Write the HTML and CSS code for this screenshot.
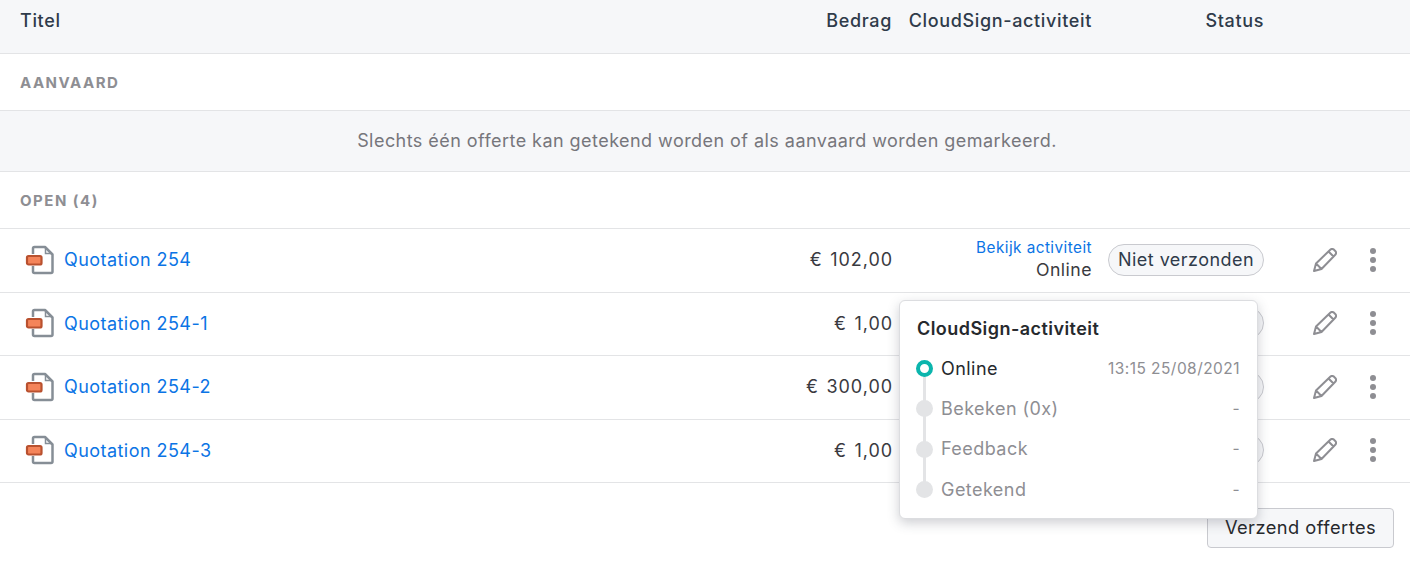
FILE: index.html
```html
<!DOCTYPE html>
<html lang="nl">
<head>
  <meta charset="UTF-8" />
  <title>Offertes</title>
  <link rel="stylesheet" href="styles.css">
</head>
<body>
  <svg class="defs" width="0" height="0">
    <symbol id="doc" viewBox="0 0 30 30">
      <path d="M8 9V3.500Q8 2 9.500 2H20L27.500 9.500V26.500Q27.500 28 26 28H9.500Q8 28 8 26.500V21" fill="#fff" stroke="#868e96" stroke-width="2.500" stroke-linejoin="round"/>
      <path d="M20.500 3V8.500H26.500" fill="none" stroke="#868e96" stroke-width="1.500"/>
      <rect x="2" y="11" width="14.500" height="8.500" rx="1.500" fill="#f4845a" stroke="#b9512f" stroke-width="2.200"/>
    </symbol>
    <symbol id="pencil" viewBox="0 0 24 24">
      <path d="M1 23L3 15.500L17.500 1.500Q19 .4 20.500 1.300L22.700 3.500Q23.600 5 22.500 6.500L8.500 21Z M3 15.500L8.500 21 M15.500 3.500L20.500 8.500" fill="none" stroke="#8e8e93" stroke-width="2" stroke-linejoin="round"/>
    </symbol>
  </svg>

  <div class="table-head row">
    <div>Titel</div>
    <div class="num">Bedrag</div>
    <div class="num">CloudSign-activiteit</div>
    <div class="status-col">Status</div>
    <div></div>
  </div>

  <div class="section">Aanvaard</div>
  <div class="notice">Slechts één offerte kan getekend worden of als aanvaard worden gemarkeerd.</div>
  <div class="section">Open (4)</div>

  <div class="quote row">
    <div class="title"><svg class="doc"><use href="#doc"/></svg><a href="#">Quotation 254</a></div>
    <div class="num amount">€ 102,00</div>
    <div class="activity"><a href="#">Bekijk activiteit</a><span>Online</span></div>
    <div class="status-col"><span class="badge">Niet verzonden</span></div>
    <div class="actions"><svg class="pencil"><use href="#pencil"/></svg><span class="dots"><i></i><i></i><i></i></span></div>
  </div>
  <!-- Rijen onder de popover: activiteit en badge-tekst vallen erachter -->
  <div class="quote row">
    <div class="title"><svg class="doc"><use href="#doc"/></svg><a href="#">Quotation 254-1</a></div>
    <div class="num amount">€ 1,00</div>
    <div class="activity"></div>
    <div class="status-col"><span class="badge"></span></div>
    <div class="actions"><svg class="pencil"><use href="#pencil"/></svg><span class="dots"><i></i><i></i><i></i></span></div>
  </div>
  <div class="quote row">
    <div class="title"><svg class="doc"><use href="#doc"/></svg><a href="#">Quotation 254-2</a></div>
    <div class="num amount">€ 300,00</div>
    <div class="activity"></div>
    <div class="status-col"><span class="badge"></span></div>
    <div class="actions"><svg class="pencil"><use href="#pencil"/></svg><span class="dots"><i></i><i></i><i></i></span></div>
  </div>
  <div class="quote row">
    <div class="title"><svg class="doc"><use href="#doc"/></svg><a href="#">Quotation 254-3</a></div>
    <div class="num amount">€ 1,00</div>
    <div class="activity"></div>
    <div class="status-col"><span class="badge"></span></div>
    <div class="actions"><svg class="pencil"><use href="#pencil"/></svg><span class="dots"><i></i><i></i><i></i></span></div>
  </div>

  <div class="footer"><button type="button" class="btn">Verzend offertes</button></div>

  <!-- Popover boven de rijen -->
  <div class="popover">
    <h3>CloudSign-activiteit</h3>
    <ul class="timeline">
      <li class="done"><span>Online</span><time>13:15 25/08/2021</time></li>
      <li><span>Bekeken (0x)</span><time>-</time></li>
      <li><span>Feedback</span><time>-</time></li>
      <li><span>Getekend</span><time>-</time></li>
    </ul>
  </div>
</body>
</html>
```
FILE: styles.css
```css
body {
  margin: 0;
  font-family: Inter, sans-serif;
  font-size: 18px;
  letter-spacing: 0.45px;
  color: #2e3338;
  background: #fff;
  position: relative;
  height: 564px;
  overflow: hidden;
}

.defs {
  position: absolute;
}

a {
  color: #0b74e5;
  text-decoration: none;
}

.row {
  display: grid;
  grid-template-columns: 1fr 100px 200px 172px 146px;
  padding-left: 20px;
  align-items: center;
  box-sizing: border-box;
}

.table-head {
  height: 54px;
  padding-bottom: 12px;
  background: #f6f7f9;
  border-bottom: 1px solid #e3e4e6;
  font-weight: 500;
  letter-spacing: 0.65px;
  color: #2f3b4a;
}

.num {
  text-align: right;
}

.amount {
  letter-spacing: 0.95px;
  word-spacing: 1.500px;
  margin-right: -1px;
  color: #3a3a3f;
}

.status-col {
  text-align: right;
}

.section {
  height: 57px;
  box-sizing: border-box;
  padding: 19px 20px 0;
  border-bottom: 1px solid #e3e4e6;
  font-size: 15px;
  font-weight: 700;
  letter-spacing: 1.500px;
  text-transform: uppercase;
  color: #8e8e93;
}

.notice {
  height: 61px;
  box-sizing: border-box;
  padding-left: 4px;
  background: #f6f7f9;
  border-bottom: 1px solid #e3e4e6;
  text-align: center;
  line-height: 60px;
  color: #76767c;
}

.quote {
  height: 63.500px;
  padding-bottom: 1px;
  border-bottom: 1px solid #e3e4e6;
}

.title {
  display: flex;
  align-items: center;
  gap: 9px;
  padding-left: 5px;
}

.doc {
  width: 30px;
  height: 30px;
}

.activity {
  display: flex;
  flex-direction: column;
  align-items: flex-end;
  font-size: 17.700px;
  line-height: 23px;
  color: #3a3a3f;
}

.activity a {
  font-size: 15.300px;
  line-height: 20px;
}

.badge {
  display: block;
  width: 156px;
  height: 32px;
  margin-left: auto;
  box-sizing: border-box;
  text-align: center;
  line-height: 30px;
  border: 1px solid #c9cacf;
  border-radius: 16px;
  background: #f6f7f9;
  color: #2f3b4a;
}

.actions {
  display: flex;
  align-items: center;
  padding-left: 49px;
}

.pencil {
  width: 24px;
  height: 24px;
}

.dots {
  display: flex;
  flex-direction: column;
  gap: 3px;
  margin-left: 33px;
}

.dots i {
  width: 6px;
  height: 6px;
  border-radius: 50%;
  background: #8e8e93;
}

.footer {
  display: flex;
  justify-content: flex-end;
  padding: 25px 16px 0;
}

.btn {
  width: 187px;
  height: 40px;
  padding-bottom: 4px;
  font-family: inherit;
  font-size: 18.300px;
  letter-spacing: inherit;
  color: #26292d;
  background: #f6f7f9;
  border: 1px solid #c9cacf;
  border-radius: 4px;
}

.popover {
  position: absolute;
  left: 899px;
  top: 300px;
  width: 359px;
  height: 219px;
  box-sizing: border-box;
  padding: 17px 17px 0;
  background: #fff;
  border: 1px solid #dcdde0;
  border-radius: 6px;
  box-shadow: 0 4px 12px rgba(60, 65, 80, 0.25);
}

.popover h3 {
  margin: 0 0 8px;
  font-size: 18px;
  line-height: 22px;
  font-weight: 600;
  color: #26292d;
}

.timeline {
  list-style: none;
  margin: 0;
  padding: 0;
}

.timeline li {
  position: relative;
  display: flex;
  justify-content: space-between;
  align-items: center;
  height: 40.300px;
  padding-left: 24px;
  color: #8e8e93;
}

.timeline li::before {
  content: "";
  position: absolute;
  left: -1px;
  top: 12px;
  width: 17px;
  height: 17px;
  border-radius: 50%;
  background: #e3e4e6;
}

.timeline li:not(:last-child)::after {
  content: "";
  position: absolute;
  left: 6px;
  top: 20px;
  width: 3px;
  height: 41px;
  background: #e3e4e6;
}

.timeline li.done span {
  color: #26292d;
}

.timeline li.done::before {
  box-sizing: border-box;
  background: #fff;
  border: 4px solid #0bb5ad;
  z-index: 1;
}

.timeline time {
  font-size: 15.500px;
}
```
